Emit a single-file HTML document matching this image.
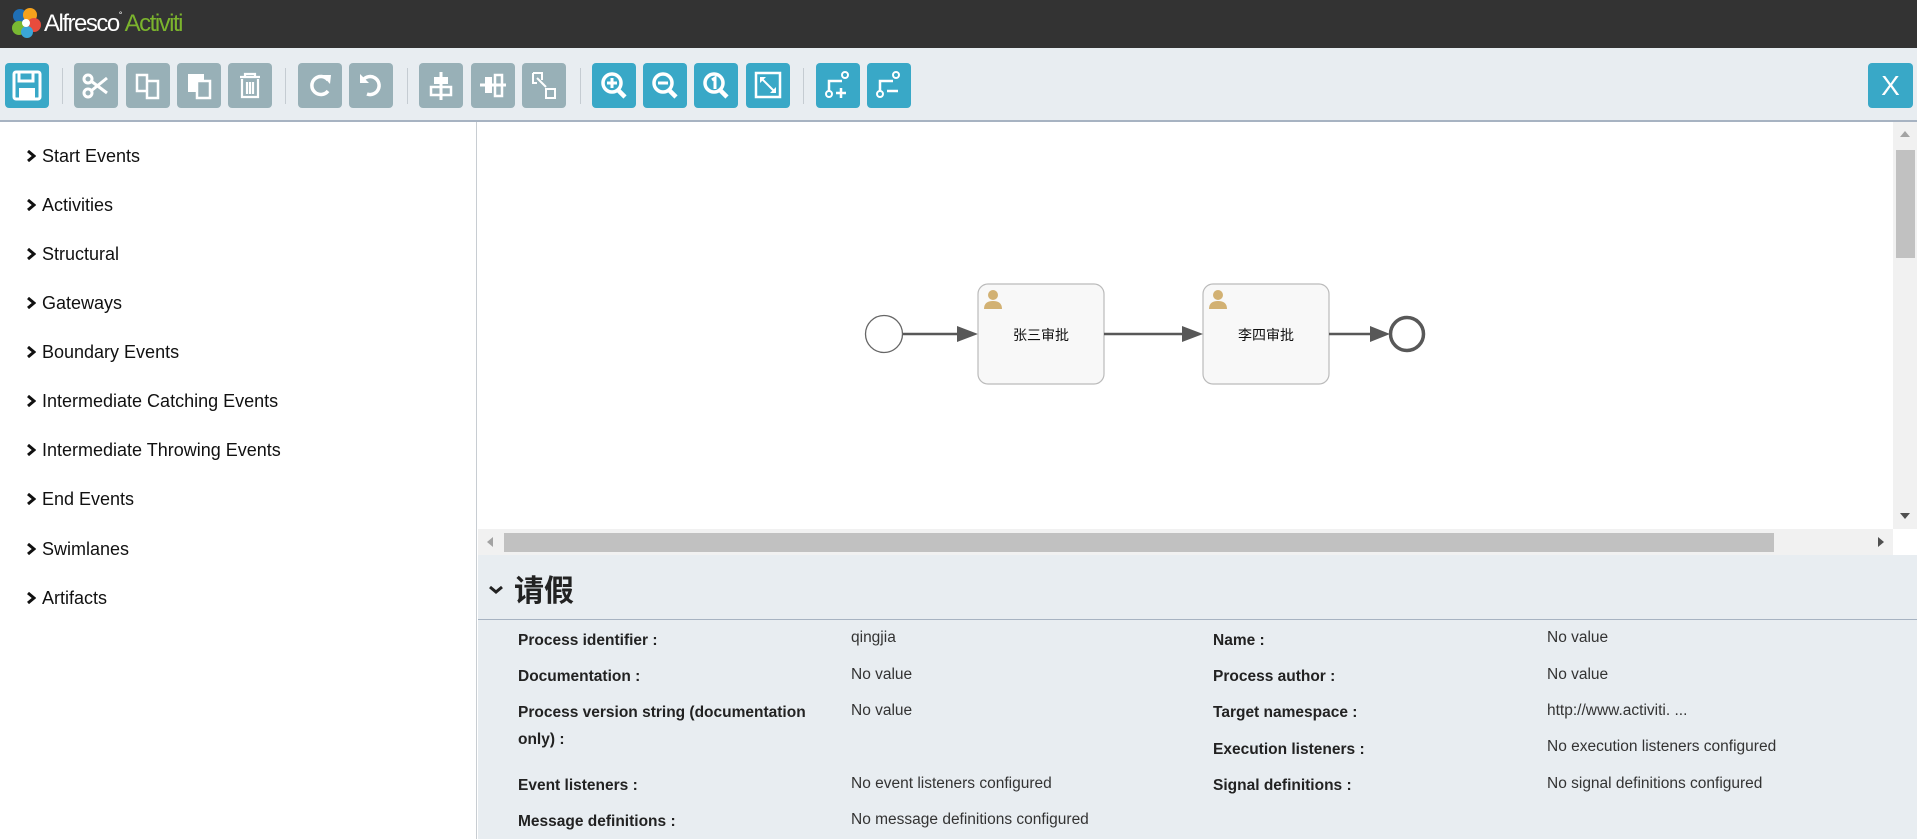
<!DOCTYPE html>
<html><head><meta charset="utf-8"><style>
*{margin:0;padding:0;box-sizing:border-box}
body{width:1917px;height:839px;overflow:hidden;background:#fff;font-family:"Liberation Sans","Noto Sans CJK SC",sans-serif;position:relative}
.hdr{position:absolute;left:0;top:0;width:1917px;height:48px;background:#333}
.tb{position:absolute;left:0;top:48px;width:1917px;height:74px;background:#e8edf1;border-bottom:2px solid #a7b3c2}
.b{position:absolute;top:15px;width:44px;height:45px;border-radius:4px;background:#98b0b7}
.b.bl{background:#39a8c7}
.b svg{position:absolute;left:0;top:0}
.sep{position:absolute;top:20px;width:1px;height:36px;background:#c5ccd2}
.left{position:absolute;left:0;top:122px;width:477px;height:717px;border-right:1px solid #c8cdd2;background:#fff}
.it{position:absolute;left:26px;font-size:18px;color:#111}
.it svg{display:inline-block;margin-right:6px;vertical-align:0px}
.canvas{position:absolute;left:478px;top:122px;width:1439px;height:433px}
.vs{position:absolute;left:1893px;top:122px;width:24px;height:407px;background:#f1f1f1}
.hs{position:absolute;left:478px;top:529px;width:1415px;height:26px;background:#f1f1f1}
.props{position:absolute;left:478px;top:555px;width:1439px;height:284px;background:#e8edf1}
.lb{position:absolute;font-size:15.5px;font-weight:bold;color:#222;line-height:27px}
.v{position:absolute;font-size:15.5px;color:#333;line-height:25px}
</style></head><body>
<div class="hdr">
<svg style="position:absolute;left:10px;top:6px" width="32" height="34" viewBox="0 0 32 34">
<circle cx="10" cy="10" r="7" fill="#1f6fb5"/><circle cx="20" cy="9" r="7" fill="#f6a21c"/><circle cx="24" cy="19" r="7" fill="#e84c3d"/><circle cx="9" cy="22" r="7" fill="#79b832"/><circle cx="17" cy="26" r="6" fill="#3aa6d8"/><circle cx="16" cy="17" r="4" fill="#fff"/></svg>
<div style="position:absolute;left:44px;top:10px;font-size:24px;letter-spacing:-1.5px;color:#fff">Alfresco<span style="font-size:9px;vertical-align:top">°</span> <span style="color:#7bb42d">Activiti</span></div>
</div>
<div class="tb">
<div class="b bl" style="left:5px"><svg width="44" height="45"><rect x="9" y="9" width="26" height="27" rx="2" fill="none" stroke="#fff" stroke-width="3"/><rect x="14" y="9" width="14" height="9" fill="none" stroke="#fff" stroke-width="3"/><rect x="14" y="25" width="16" height="11" fill="#fff"/></svg></div>
<div class="sep" style="left:62px"></div>
<div class="b" style="left:74px"><svg width="44" height="45"><circle cx="14" cy="16" r="4" fill="none" stroke="#fff" stroke-width="3"/><circle cx="14" cy="30" r="4" fill="none" stroke="#fff" stroke-width="3"/><path d="M17 18L33 30M17 28L33 15" stroke="#fff" stroke-width="3"/></svg></div>
<div class="b" style="left:126px"><svg width="44" height="45"><path d="M11 12h10v16H11z M21 18h11v17H21z" fill="none" stroke="#fff" stroke-width="2.5"/></svg></div>
<div class="b" style="left:177px"><svg width="44" height="45"><path d="M11 11h16v18H11z" fill="#fff"/><path d="M20 18h13v17H20z" fill="#98b0b7" stroke="#fff" stroke-width="2.5"/></svg></div>
<div class="b" style="left:228px"><svg width="44" height="45"><path d="M12 14h20M17 14v-3h10v3M14 16v18h16V16M19 19v12M22 19v12M25 19v12" fill="none" stroke="#fff" stroke-width="2.2"/></svg></div>
<div class="sep" style="left:285px"></div>
<div class="b" style="left:298px"><svg width="44" height="45"><path d="M30 17A9 9 0 1 0 30 28" fill="none" stroke="#fff" stroke-width="3.5"/><path d="M24 12l9 0l-1 9z" fill="#fff"/></svg></div>
<div class="b" style="left:349px"><svg width="44" height="45"><path d="M14 17A9 9 0 1 1 18 31" fill="none" stroke="#fff" stroke-width="3.5"/><path d="M11 11v9h9z" fill="#fff"/></svg></div>
<div class="sep" style="left:407px"></div>
<div class="b" style="left:419px"><svg width="44" height="45"><path d="M22 9v28" stroke="#fff" stroke-width="3"/><rect x="15" y="14" width="14" height="7" fill="#fff"/><rect x="12" y="24" width="20" height="8" fill="none" stroke="#fff" stroke-width="2.5"/></svg></div>
<div class="b" style="left:471px"><svg width="44" height="45"><path d="M9 22h26" stroke="#fff" stroke-width="3"/><rect x="14" y="14" width="7" height="16" fill="#fff"/><rect x="24" y="12" width="7" height="21" fill="none" stroke="#fff" stroke-width="2.5"/></svg></div>
<div class="b" style="left:522px"><svg width="44" height="45"><path d="M11 10h9v7M11 10v10h4M24 26h9v9h-9z" fill="none" stroke="#fff" stroke-width="2"/><path d="M15 15l9 9" stroke="#fff" stroke-width="2"/></svg></div>
<div class="sep" style="left:580px"></div>
<div class="b bl" style="left:592px"><svg width="44" height="45"><circle cx="20" cy="20" r="9" fill="none" stroke="#fff" stroke-width="3.5"/><path d="M26 27l7 7" stroke="#fff" stroke-width="4.5"/><path d="M15 20h10M20 15v10" stroke="#fff" stroke-width="3"/></svg></div>
<div class="b bl" style="left:643px"><svg width="44" height="45"><circle cx="20" cy="20" r="9" fill="none" stroke="#fff" stroke-width="3.5"/><path d="M26 27l7 7" stroke="#fff" stroke-width="4.5"/><path d="M15 20h10" stroke="#fff" stroke-width="3"/></svg></div>
<div class="b bl" style="left:694px"><svg width="44" height="45"><circle cx="20" cy="20" r="9" fill="none" stroke="#fff" stroke-width="3.5"/><path d="M26 27l7 7" stroke="#fff" stroke-width="4.5"/><path d="M18 17l3-2v11" stroke="#fff" stroke-width="3" fill="none"/></svg></div>
<div class="b bl" style="left:746px"><svg width="44" height="45"><rect x="10" y="10" width="24" height="24" fill="none" stroke="#fff" stroke-width="2.5"/><path d="M15 15l14 14" stroke="#fff" stroke-width="2"/><path d="M14 14h6l-6 6zM30 30h-6l6-6z" fill="#fff"/></svg></div>
<div class="sep" style="left:803px"></div>
<div class="b bl" style="left:816px"><svg width="44" height="45"><circle cx="13" cy="31" r="3" fill="none" stroke="#fff" stroke-width="2"/><circle cx="29" cy="12" r="3" fill="none" stroke="#fff" stroke-width="2"/><path d="M13 28v-10h13M25 25v10M20 30h10" stroke="#fff" stroke-width="2.5" fill="none"/></svg></div>
<div class="b bl" style="left:867px"><svg width="44" height="45"><circle cx="13" cy="31" r="3" fill="none" stroke="#fff" stroke-width="2"/><circle cx="29" cy="12" r="3" fill="none" stroke="#fff" stroke-width="2"/><path d="M13 28v-10h13M20 28h11" stroke="#fff" stroke-width="2.5" fill="none"/></svg></div>
<div class="b bl" style="left:1868px;width:45px;top:15px;color:#fff;font-size:28px;text-align:center;line-height:45px">X</div>
</div>
<div class="left">
<div class="it" style="top:24px"><svg width="10" height="12"><path d="M2 1l6 5l-6 5" fill="none" stroke="#111" stroke-width="3"/></svg>Start Events</div>
<div class="it" style="top:73px"><svg width="10" height="12"><path d="M2 1l6 5l-6 5" fill="none" stroke="#111" stroke-width="3"/></svg>Activities</div>
<div class="it" style="top:122px"><svg width="10" height="12"><path d="M2 1l6 5l-6 5" fill="none" stroke="#111" stroke-width="3"/></svg>Structural</div>
<div class="it" style="top:171px"><svg width="10" height="12"><path d="M2 1l6 5l-6 5" fill="none" stroke="#111" stroke-width="3"/></svg>Gateways</div>
<div class="it" style="top:220px"><svg width="10" height="12"><path d="M2 1l6 5l-6 5" fill="none" stroke="#111" stroke-width="3"/></svg>Boundary Events</div>
<div class="it" style="top:269px"><svg width="10" height="12"><path d="M2 1l6 5l-6 5" fill="none" stroke="#111" stroke-width="3"/></svg>Intermediate Catching Events</div>
<div class="it" style="top:318px"><svg width="10" height="12"><path d="M2 1l6 5l-6 5" fill="none" stroke="#111" stroke-width="3"/></svg>Intermediate Throwing Events</div>
<div class="it" style="top:367px"><svg width="10" height="12"><path d="M2 1l6 5l-6 5" fill="none" stroke="#111" stroke-width="3"/></svg>End Events</div>
<div class="it" style="top:417px"><svg width="10" height="12"><path d="M2 1l6 5l-6 5" fill="none" stroke="#111" stroke-width="3"/></svg>Swimlanes</div>
<div class="it" style="top:466px"><svg width="10" height="12"><path d="M2 1l6 5l-6 5" fill="none" stroke="#111" stroke-width="3"/></svg>Artifacts</div>
</div>
<svg class="canvas" width="1439" height="433" viewBox="478 122 1439 433" style="position:absolute">
<circle cx="884" cy="334" r="18.5" fill="#fff" stroke="#666" stroke-width="1.3"/>
<path d="M903 334H972" stroke="#585858" stroke-width="2.5"/><path d="M957 326L978 334L957 342z" fill="#585858"/>
<rect x="978" y="284" width="126" height="100" rx="10" fill="#f8f8f8" stroke="#bbb" stroke-width="1.2"/>
<rect x="1203" y="284" width="126" height="100" rx="10" fill="#f8f8f8" stroke="#bbb" stroke-width="1.2"/>
<path d="M1104 334H1197" stroke="#585858" stroke-width="2.5"/><path d="M1182 326L1203 334L1182 342z" fill="#585858"/>
<path d="M1329 334H1370" stroke="#585858" stroke-width="2.5"/><path d="M1370 326L1390 334L1370 342z" fill="#585858"/>
<circle cx="1407" cy="334" r="16.5" fill="#fff" stroke="#585858" stroke-width="3.5"/>
<g fill="#d2b173"><circle cx="993" cy="295" r="5"/><path d="M984 309q0-8 9-8q9 0 9 8z"/><circle cx="1218" cy="295" r="5"/><path d="M1209 309q0-8 9-8q9 0 9 8z"/></g>
<text x="1041" y="340" font-size="14" text-anchor="middle" fill="#111" font-family="Noto Sans CJK SC,sans-serif">张三审批</text>
<text x="1266" y="340" font-size="14" text-anchor="middle" fill="#111" font-family="Noto Sans CJK SC,sans-serif">李四审批</text>
</svg>
<div class="vs"><div style="position:absolute;left:3px;top:28px;width:19px;height:108px;background:#c1c1c1"></div><div style="position:absolute;left:7px;top:9px;border:5px solid transparent;border-bottom:6px solid #a3a3a3;border-top:0"></div><div style="position:absolute;left:7px;top:391px;border:5px solid transparent;border-top:6px solid #505050;border-bottom:0"></div></div>
<div class="hs"><div style="position:absolute;left:26px;top:4px;width:1270px;height:19px;background:#c1c1c1"></div><div style="position:absolute;left:9px;top:8px;border:5px solid transparent;border-right:6px solid #a3a3a3;border-left:0"></div><div style="position:absolute;left:1400px;top:8px;border:5px solid transparent;border-left:6px solid #505050;border-right:0"></div></div>
<div class="props">
<svg style="position:absolute;left:11px;top:30px" width="14" height="10"><path d="M1 2l6 5l6-5" fill="none" stroke="#222" stroke-width="3"/></svg>
<div style="position:absolute;left:36px;top:13px;font-size:30px;font-weight:bold;color:#222;font-family:'Noto Sans CJK SC',sans-serif;line-height:40px">请假</div>
<div style="position:absolute;left:0;top:64px;width:1439px;height:1px;background:#a7b3c2"></div>
<div class="lb" style="left:40px;top:72px">Process identifier :</div><div class="v" style="left:373px;top:70px">qingjia</div>
<div class="lb" style="left:40px;top:108px">Documentation :</div><div class="v" style="left:373px;top:107px">No value</div>
<div class="lb" style="left:40px;top:144px;width:318px">Process version string (documentation only) :</div><div class="v" style="left:373px;top:143px">No value</div>
<div class="lb" style="left:40px;top:217px">Event listeners :</div><div class="v" style="left:373px;top:216px">No event listeners configured</div>
<div class="lb" style="left:40px;top:253px">Message definitions :</div><div class="v" style="left:373px;top:252px">No message definitions configured</div>
<div class="lb" style="left:735px;top:72px">Name :</div><div class="v" style="left:1069px;top:70px">No value</div>
<div class="lb" style="left:735px;top:108px">Process author :</div><div class="v" style="left:1069px;top:107px">No value</div>
<div class="lb" style="left:735px;top:144px">Target namespace :</div><div class="v" style="left:1069px;top:143px">http://www.activiti. ...</div>
<div class="lb" style="left:735px;top:181px">Execution listeners :</div><div class="v" style="left:1069px;top:179px">No execution listeners configured</div>
<div class="lb" style="left:735px;top:217px">Signal definitions :</div><div class="v" style="left:1069px;top:216px">No signal definitions configured</div>
</div>
</body></html>
